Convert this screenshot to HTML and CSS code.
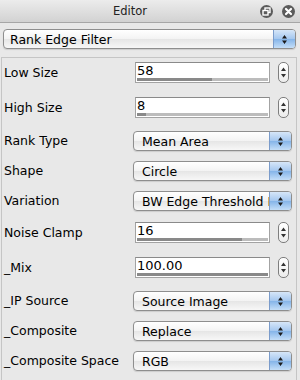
FILE: index.html
```html
<!doctype html>
<html>
<head>
	<meta charset="utf-8">
	<title>Editor</title>
	<link rel="stylesheet" href="styles.css">
</head>
<body>

	<div class="titlebar">
		<div class="title">Editor</div>
		<div class="title-buttons">
			<span class="tb-btn">
				<svg width="13" height="13" viewBox="0 0 13 13"><rect x="5" y="3" width="5" height="4.5" fill="none" stroke="#fff" stroke-width="1.4"/><rect x="3" y="5.5" width="5" height="4.5" fill="#5b5b5b" stroke="#fff" stroke-width="1.4"/></svg>
			</span>
			<span class="tb-btn">
				<svg width="13" height="13" viewBox="0 0 13 13"><path d="M4 4 L9 9 M9 4 L4 9" stroke="#fff" stroke-width="2.2" stroke-linecap="round"/></svg>
			</span>
		</div>
	</div>

	<div class="popup filter-select">
		<span class="popup-text">Rank Edge Filter</span>
		<span class="popup-arrows"><svg width="7" height="11" viewBox="0 0 7 11"><path d="M3.5 1 L6 4.5 L1 4.5 Z M1 6.5 L6 6.5 L3.5 10 Z" fill="#1b1b1b"/></svg></span>
	</div>

	<div class="panel">
		<div class="row num first">
			<label>Low Size</label>
			<div class="field"><div class="field-value">58</div><div class="bar"><div class="bar-fill" style="width: 57%"></div></div></div>
			<div class="stepper"><svg width="9" height="19" viewBox="0 0 9 19"><path d="M4.5 4.5 L7 8 L2 8 Z M2 11 L7 11 L4.5 14.5 Z" fill="#333"/></svg></div>
		</div>
		<div class="row num">
			<label>High Size</label>
			<div class="field"><div class="field-value">8</div><div class="bar"><div class="bar-fill" style="width: 7%"></div></div></div>
			<div class="stepper"><svg width="9" height="19" viewBox="0 0 9 19"><path d="M4.5 4.5 L7 8 L2 8 Z M2 11 L7 11 L4.5 14.5 Z" fill="#333"/></svg></div>
		</div>
		<div class="row">
			<label>Rank Type</label>
			<div class="popup"><span class="popup-text">Mean Area</span><span class="popup-arrows"><svg width="7" height="11" viewBox="0 0 7 11"><path d="M3.5 1 L6 4.5 L1 4.5 Z M1 6.5 L6 6.5 L3.5 10 Z" fill="#1b1b1b"/></svg></span></div>
		</div>
		<div class="row">
			<label>Shape</label>
			<div class="popup"><span class="popup-text">Circle</span><span class="popup-arrows"><svg width="7" height="11" viewBox="0 0 7 11"><path d="M3.5 1 L6 4.5 L1 4.5 Z M1 6.5 L6 6.5 L3.5 10 Z" fill="#1b1b1b"/></svg></span></div>
		</div>
		<div class="row">
			<label>Variation</label>
			<div class="popup"><span class="popup-text">BW Edge Threshold I</span><span class="popup-arrows"><svg width="7" height="11" viewBox="0 0 7 11"><path d="M3.5 1 L6 4.5 L1 4.5 Z M1 6.5 L6 6.5 L3.5 10 Z" fill="#1b1b1b"/></svg></span></div>
		</div>
		<div class="row num">
			<label>Noise Clamp</label>
			<div class="field"><div class="field-value">16</div><div class="bar"><div class="bar-fill" style="width: 80%"></div></div></div>
			<div class="stepper"><svg width="9" height="19" viewBox="0 0 9 19"><path d="M4.5 4.5 L7 8 L2 8 Z M2 11 L7 11 L4.5 14.5 Z" fill="#333"/></svg></div>
		</div>
		<div class="row num">
			<label>_Mix</label>
			<div class="field"><div class="field-value">100.00</div><div class="bar"><div class="bar-fill" style="width: 100%"></div></div></div>
			<div class="stepper"><svg width="9" height="19" viewBox="0 0 9 19"><path d="M4.5 4.5 L7 8 L2 8 Z M2 11 L7 11 L4.5 14.5 Z" fill="#333"/></svg></div>
		</div>
		<div class="row">
			<label>_IP Source</label>
			<div class="popup"><span class="popup-text">Source Image</span><span class="popup-arrows"><svg width="7" height="11" viewBox="0 0 7 11"><path d="M3.5 1 L6 4.5 L1 4.5 Z M1 6.5 L6 6.5 L3.5 10 Z" fill="#1b1b1b"/></svg></span></div>
		</div>
		<div class="row">
			<label>_Composite</label>
			<div class="popup"><span class="popup-text">Replace</span><span class="popup-arrows"><svg width="7" height="11" viewBox="0 0 7 11"><path d="M3.5 1 L6 4.5 L1 4.5 Z M1 6.5 L6 6.5 L3.5 10 Z" fill="#1b1b1b"/></svg></span></div>
		</div>
		<div class="row">
			<label>_Composite Space</label>
			<div class="popup"><span class="popup-text">RGB</span><span class="popup-arrows"><svg width="7" height="11" viewBox="0 0 7 11"><path d="M3.5 1 L6 4.5 L1 4.5 Z M1 6.5 L6 6.5 L3.5 10 Z" fill="#1b1b1b"/></svg></span></div>
		</div>
	</div>

</body>
</html>
```

FILE: styles.css
```css
* {
	box-sizing: border-box;
}
body {
	margin: 0;
	width: 300px;
	height: 380px;
	overflow: hidden;
	background: #e8e8e8;
	font-family: "DejaVu Sans", sans-serif;
	font-size: 12.5px;
	color: #000;
}

/* window title */
.titlebar {
	height: 23px;
	display: flex;
	align-items: center;
	background: linear-gradient(#ececec, #d2d2d2);
	border-bottom: 1px solid #a6a6a6;
}
.title {
	flex: 1;
	text-align: center;
	font-size: 11.5px;
	color: #222;
}
.title-buttons {
	display: flex;
	gap: 9px;
	padding-right: 5px;
}
.tb-btn {
	width: 13px;
	height: 13px;
	border-radius: 50%;
	background: #5b5b5b;
	display: flex;
}

/* popup buttons */
.popup {
	height: 20px;
	display: flex;
	align-items: center;
	border: 1px solid #8e8e8e;
	border-radius: 4px;
	background: linear-gradient(#ffffff, #f3f3f3 50%, #e6e6e6 52%, #f7f7f7);
	box-shadow: 0 1px 1px rgba(0, 0, 0, 0.12);
	overflow: hidden;
}
.popup-text {
	flex: 1;
	padding-left: 8px;
	white-space: nowrap;
	overflow: hidden;
}
.popup-arrows {
	width: 22px;
	height: 100%;
	flex-shrink: 0;
	display: flex;
	align-items: center;
	justify-content: center;
	border-left: 1px solid #7b9ccb;
	background: linear-gradient(#d6e6f8, #a4c7ef 50%, #86b5e9 52%, #c4def8);
}
.filter-select {
	margin: 6px 4px 0 3px;
}
.filter-select .popup-text {
	padding-left: 6px;
}

/* parameter panel */
.panel {
	margin: 8px 3px 0 1px;
	border: 1px solid #c5c5c5;
	border-bottom: none;
	padding: 0 4px 0 2px;
	height: 330px;
}
.row {
	height: 30px;
	display: flex;
	align-items: center;
}
.row.num {
	height: 35px;
}
.row.first {
	height: 32px;
	padding-bottom: 3px;
}
.row label {
	width: 129px;
	flex-shrink: 0;
	white-space: nowrap;
}
.row .popup {
	flex: 1;
	margin-top: 2px;
}
.field {
	width: 135px;
	height: 21px;
	margin-left: 2px;
	background: #fff;
	border: 1px solid #a3a3a3;
	border-top-color: #8a8a8a;
	display: flex;
	flex-direction: column;
	padding: 0 1px 1px 1px;
}
.field-value {
	font-size: 13px;
	line-height: 15px;
}
.bar {
	margin-top: auto;
	height: 4px;
	background: #bcbcbc;
}
.bar-fill {
	height: 100%;
	background: #898989;
}
.stepper {
	width: 11px;
	height: 21px;
	margin-left: 8px;
	border: 1px solid #7e7e7e;
	border-radius: 5px;
	background: linear-gradient(#ffffff, #ececec);
	display: flex;
	align-items: center;
	justify-content: center;
}
```
